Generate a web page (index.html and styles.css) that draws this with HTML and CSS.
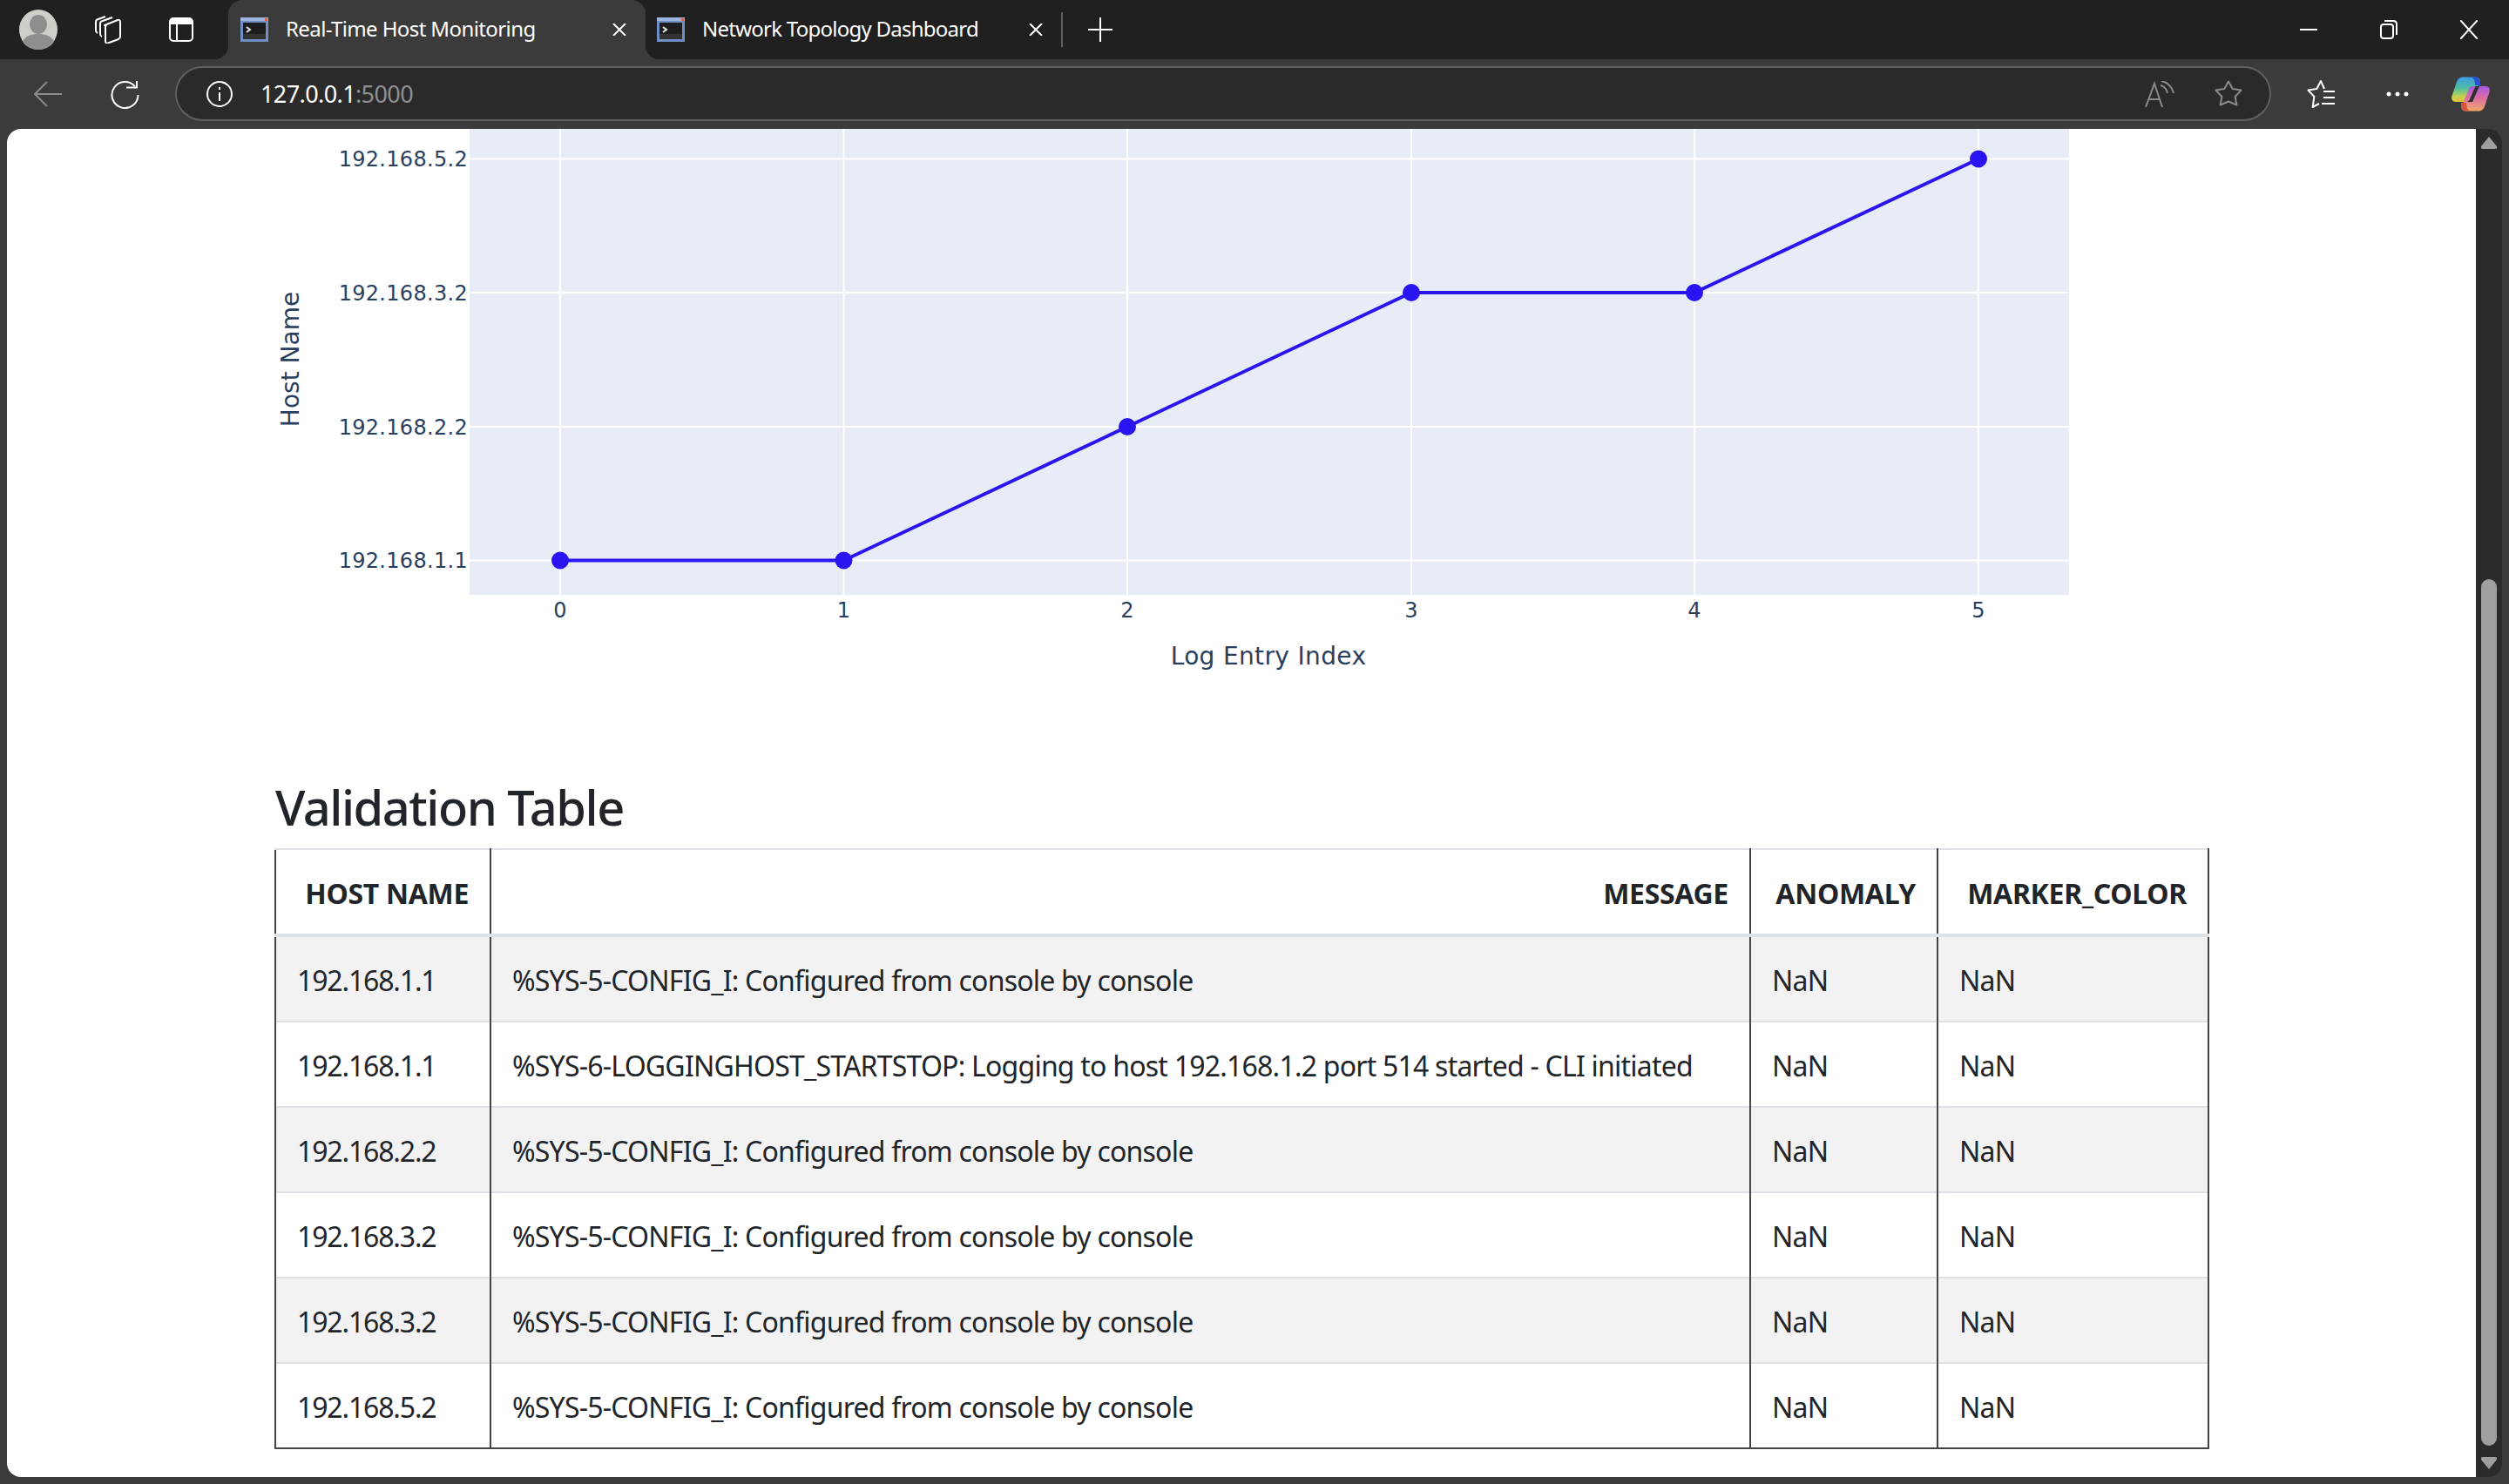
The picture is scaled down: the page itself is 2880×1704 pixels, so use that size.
FILE: index.html
```html
<!DOCTYPE html>
<html lang="en">
<head>
    <meta charset="UTF-8">
    <title>Real-Time Host Monitoring</title>
    <link rel="stylesheet" href="styles.css">
</head>
<body>
    <svg class="defs" width="0" height="0">
        <defs>
            <symbol id="favicon" viewBox="0 0 32 28">
                <rect x="0" y="0" width="32" height="28" fill="#6f8fc4"/>
                <rect x="0" y="0" width="32" height="4" fill="#9db5dd"/>
                <rect x="28" y="1" width="3" height="3" fill="#e0604a"/>
                <rect x="3" y="6" width="26" height="19" fill="#1e1e1e"/>
                <rect x="3" y="19" width="26" height="6" fill="#333"/>
                <path d="M7 11l4 3-4 3" fill="none" stroke="#e6e6e6" stroke-width="2"/>
            </symbol>
            <symbol id="tabclose" viewBox="0 0 16 14">
                <path d="M1 0L15 14M15 0L1 14" fill="none" stroke="#fff" stroke-width="2"/>
            </symbol>
            <linearGradient id="cpleft" x1="0" y1="0" x2="0" y2="1">
                <stop offset="0" stop-color="#3e9be8"/>
                <stop offset="0.45" stop-color="#4dbfa0"/>
                <stop offset="0.8" stop-color="#c8d24c"/>
                <stop offset="1" stop-color="#e6bf40"/>
            </linearGradient>
            <linearGradient id="cpright" x1="0" y1="1" x2="0" y2="0">
                <stop offset="0" stop-color="#a85ae0"/>
                <stop offset="0.5" stop-color="#dc6fa0"/>
                <stop offset="1" stop-color="#f2aa68"/>
            </linearGradient>
        </defs>
    </svg>

    <div class="tabstrip">
        <div class="slot slot-avatar">
            <svg width="44" height="46" viewBox="0 0 44 46">
                <ellipse cx="22" cy="23" rx="22" ry="23" fill="#cfcfca"/>
                <ellipse cx="22" cy="17" rx="10" ry="11" fill="#8e8e8c"/>
                <path d="M4 37c3-7 10-9 18-9s15 2 18 9c-4 6-11 9-18 9S8 43 4 37z" fill="#8e8e8c"/>
            </svg>
        </div>
        <div class="slot slot-work">
            <svg width="32" height="32" viewBox="0 0 32 32" fill="none" stroke="#fff" stroke-width="2" stroke-linejoin="round">
                <path d="M12 11l15-6c2-.5 3 .5 3 2v17c0 1.500-.5 2-2 3l-12 4.500c-1.500.5-3-.5-3-2V13c0-1 0-1.500 1-2z"/>
                <path d="M9 24c-1-.5-2-1-2-3V9c0-1 .5-2 1.500-2.500L21 2"/>
                <path d="M4 20c-1-.5-2-1-2-3V7c0-1 .5-2 1.500-2.500L13 1"/>
            </svg>
        </div>
        <div class="slot slot-vtabs">
            <svg width="28" height="28" viewBox="0 0 28 28">
                <rect x="1" y="1" width="26" height="26" rx="4" fill="none" stroke="#fff" stroke-width="2"/>
                <path d="M1 5a4 4 0 0 1 4-4h18a4 4 0 0 1 4 4v3H1z" fill="#fff"/>
                <path d="M9 8v19" stroke="#fff" stroke-width="2"/>
            </svg>
        </div>
        <div class="tab tab-active">
            <svg class="favicon"><use href="#favicon"/></svg>
            <span class="tab-title">Real-Time Host Monitoring</span>
            <svg class="tab-close"><use href="#tabclose"/></svg>
        </div>
        <div class="tab tab-other">
            <svg class="favicon"><use href="#favicon"/></svg>
            <span class="tab-title">Network Topology Dashboard</span>
            <svg class="tab-close"><use href="#tabclose"/></svg>
        </div>
        <div class="tab-sep"></div>
        <svg class="newtab" width="28" height="28" viewBox="0 0 28 28">
            <path d="M14 0v28M0 14h28" stroke="#fff" stroke-width="2"/>
        </svg>
        <div class="winctl">
            <div class="winbtn">
                <svg width="20" height="20" viewBox="0 0 20 20"><path d="M0 10h20" stroke="#fff" stroke-width="2"/></svg>
            </div>
            <div class="winbtn">
                <svg width="20" height="22" viewBox="0 0 20 22" fill="none" stroke="#fff" stroke-width="2">
                    <rect x="1" y="5" width="14" height="16" rx="3"/>
                    <path d="M5 1h10c3 0 4 2 4 4v12"/>
                </svg>
            </div>
            <div class="winbtn">
                <svg width="20" height="22" viewBox="0 0 20 22"><path d="M0 0l20 22M20 0L0 22" stroke="#fff" stroke-width="2"/></svg>
            </div>
        </div>
    </div>

    <div class="toolbar">
        <div class="navbtn">
            <svg width="32" height="30" viewBox="0 0 32 30" fill="none" stroke="#8b8b8b" stroke-width="2">
                <path d="M32 15H2M15 1L1 15l14 14"/>
            </svg>
        </div>
        <div class="navbtn">
            <svg width="33" height="34" viewBox="0 0 33 34" fill="none" stroke="#fff" stroke-width="2">
                <path d="M28 8.400A15 15 0 1 0 31.500 18"/>
                <path d="M30 2V9.500H18"/>
            </svg>
        </div>
        <div class="address">
            <svg width="30" height="32" viewBox="0 0 30 32" fill="none" stroke="#fff" stroke-width="2">
                <circle cx="15" cy="16" r="14"/>
                <path d="M15 14v10M15 8v3"/>
            </svg>
            <span class="url">127.0.0.1<span class="url-port">:5000</span></span>
            <svg class="addr-read" width="34" height="30" viewBox="0 0 34 30" fill="none" stroke="#8b8b8b" stroke-width="2">
                <path d="M1 30L11 3l9 27M4 21h13"/>
                <path d="M18 5c4 1 7 4 8 9M19 0c6 1 12 6 14 14"/>
            </svg>
            <svg class="addr-star" width="32" height="32" viewBox="0 0 32 32" fill="none" stroke="#8b8b8b" stroke-width="2" stroke-linejoin="round">
                <polygon points="16,1.500 20.700,10 30.500,11.600 23.600,19 25.400,28.500 16,24.500 6.600,28.500 8.400,19 1.500,11.600 11.300,10"/>
            </svg>
        </div>
        <div class="toolbtn">
            <svg width="32" height="32" viewBox="0 0 32 32" fill="none" stroke="#fff" stroke-width="2" stroke-linejoin="round">
                <path d="M20 10L16 1 11.300 10 1.500 11.600 8.400 19 6.600 31 14 27"/>
                <path d="M19 13h13M19 20h13M17 27h15"/>
            </svg>
        </div>
        <div class="toolbtn">
            <svg width="26" height="8" viewBox="0 0 26 8" fill="#fff">
                <circle cx="3" cy="4" r="2.500"/><circle cx="13" cy="4" r="2.500"/><circle cx="23" cy="4" r="2.500"/>
            </svg>
        </div>
        <div class="toolbtn toolbtn-copilot">
            <svg width="44" height="40" viewBox="4 8 44 40">
                <path d="M17 8.500H31C35 8.500 37 11 36.500 14L27 36C26 37 25 37 24 37H9C5 37 3.500 34 4.500 30L10 14C11.500 10 14 8.500 17 8.500Z" fill="url(#cpleft)"/>
                <path d="M27 8.500H31C35 8.500 37 11.500 37 18H31C31 13 30 10 27 8.500Z" fill="#2b50d6"/>
                <path d="M17 8.500H31C35 8.500 37 11 36.500 14L27 36C26 37 25 37 24 37H9C5 37 3.500 34 4.500 30L10 14C11.500 10 14 8.500 17 8.500Z" fill="url(#cpright)" transform="rotate(180 26 28)"/>
                <path d="M25 47.500H21C17 47.500 15 44.500 15 38H21C21 43 22 46 25 47.500Z" fill="#d5563a"/>
                <path d="M31.500 19L36 19 28 37 22 37 24.500 35z" fill="#2e2e2e"/>
            </svg>
        </div>
    </div>

    <div class="viewport">
        <div class="page">
            <svg class="chart" width="2221" height="660" viewBox="0 0 2221 660">
                <rect x="224" y="0" width="1836" height="535" fill="#e8ecf6"/>
                <g stroke="#fff" stroke-width="2">
                    <path d="M224 34.500H2060M224 188H2060M224 342H2060M224 495.500H2060"/>
                    <path d="M328 0V535M653.500 0V535M979 0V535M1305 0V535M1630 0V535M1956 0V535"/>
                </g>
                <polyline points="328,495.500 653.500,495.500 979,342 1305,188 1630,188 1956,34.500" fill="none" stroke="#2a14ef" stroke-width="4"/>
                <g fill="#2a14ef">
                    <circle cx="328" cy="495.500" r="10"/>
                    <circle cx="653.500" cy="495.500" r="10"/>
                    <circle cx="979" cy="342" r="10"/>
                    <circle cx="1305" cy="188" r="10"/>
                    <circle cx="1630" cy="188" r="10"/>
                    <circle cx="1956" cy="34.500" r="10"/>
                </g>
                <g class="tick tick-y">
                    <text x="222" y="43">192.168.5.2</text>
                    <text x="222" y="197">192.168.3.2</text>
                    <text x="222" y="351">192.168.2.2</text>
                    <text x="222" y="504">192.168.1.1</text>
                </g>
                <g class="tick tick-x">
                    <text x="328" y="561">0</text>
                    <text x="653.500" y="561">1</text>
                    <text x="979" y="561">2</text>
                    <text x="1305" y="561">3</text>
                    <text x="1630" y="561">4</text>
                    <text x="1956" y="561">5</text>
                </g>
                <text class="axis-title axis-title-x" x="1141" y="615">Log Entry Index</text>
                <text class="axis-title" transform="translate(28 264.500) rotate(-90)">Host Name</text>
            </svg>

            <h3 class="table-heading">Validation Table</h3>
            <table class="log-table">
                <colgroup>
                    <col class="col-host">
                    <col class="col-msg">
                    <col class="col-anom">
                    <col class="col-marker">
                </colgroup>
                <thead>
                    <tr>
                        <th>HOST NAME</th>
                        <th>MESSAGE</th>
                        <th>ANOMALY</th>
                        <th>MARKER_COLOR</th>
                    </tr>
                </thead>
                <tbody>
                    <tr>
                        <td class="cell-host">192.168.1.1</td>
                        <td>%SYS-5-CONFIG_I: Configured from console by console</td>
                        <td>NaN</td>
                        <td>NaN</td>
                    </tr>
                    <tr>
                        <td class="cell-host">192.168.1.1</td>
                        <td>%SYS-6-LOGGINGHOST_STARTSTOP: Logging to host 192.168.1.2 port 514 started - CLI initiated</td>
                        <td>NaN</td>
                        <td>NaN</td>
                    </tr>
                    <tr>
                        <td class="cell-host">192.168.2.2</td>
                        <td>%SYS-5-CONFIG_I: Configured from console by console</td>
                        <td>NaN</td>
                        <td>NaN</td>
                    </tr>
                    <tr>
                        <td class="cell-host">192.168.3.2</td>
                        <td>%SYS-5-CONFIG_I: Configured from console by console</td>
                        <td>NaN</td>
                        <td>NaN</td>
                    </tr>
                    <tr>
                        <td class="cell-host">192.168.3.2</td>
                        <td>%SYS-5-CONFIG_I: Configured from console by console</td>
                        <td>NaN</td>
                        <td>NaN</td>
                    </tr>
                    <tr>
                        <td class="cell-host">192.168.5.2</td>
                        <td>%SYS-5-CONFIG_I: Configured from console by console</td>
                        <td>NaN</td>
                        <td>NaN</td>
                    </tr>
                </tbody>
            </table>
        </div>
        <div class="scrollbar">
            <svg class="scroll-arrow" width="18" height="14" viewBox="0 0 18 14"><path d="M9 0L18 11q1 3-2 3H2q-3 0-2-3z" fill="#9f9f9f"/></svg>
            <div class="scroll-thumb"></div>
            <svg class="scroll-arrow" width="18" height="14" viewBox="0 0 18 14"><path d="M9 14L18 3q1-3-2-3H2q-3 0-2 3z" fill="#9f9f9f"/></svg>
        </div>
    </div>
</body>
</html>
```

FILE: styles.css
```css
* {
    box-sizing: border-box;
}

html, body {
    margin: 0;
    padding: 0;
    height: 100%;
    overflow: hidden;
}

body {
    font-family: "Noto Sans", "Open Sans", sans-serif;
    background-color: #3b3b3b;
    color: #212529;
}

.defs {
    position: absolute;
}

/* browser chrome: tabs */
.tabstrip {
    display: flex;
    align-items: center;
    height: 68px;
    background-color: #202020;
    color: #fff;
}

.slot {
    display: flex;
    align-items: center;
    justify-content: center;
    height: 68px;
}

.slot-avatar {
    width: 88px;
}

.slot-work {
    width: 72px;
}

.slot-vtabs {
    width: 96px;
}

.tab {
    display: flex;
    align-items: center;
    height: 68px;
    font-size: 24px;
    letter-spacing: -0.75px;
}

.tab-active {
    position: relative;
    width: 479px;
    margin-left: 6px;
    padding: 0 22px 0 14px;
    background-color: #3b3b3b;
    border-radius: 16px 16px 0 0;
    letter-spacing: -0.6px;
}

.tab-active::before,
.tab-active::after {
    content: "";
    position: absolute;
    bottom: 0;
    width: 16px;
    height: 16px;
}

.tab-active::before {
    left: -16px;
    background: radial-gradient(circle at 0 0, transparent 16px, #3b3b3b 16.5px);
}

.tab-active::after {
    right: -16px;
    background: radial-gradient(circle at 100% 0, transparent 16px, #3b3b3b 16.5px);
}

.tab-other {
    width: 477px;
    padding: 0 21px 0 13px;
}

.favicon {
    width: 32px;
    height: 28px;
    flex-shrink: 0;
}

.tab-title {
    margin-left: 20px;
    padding-bottom: 3px;
    white-space: nowrap;
}

.tab-close {
    width: 16px;
    height: 14px;
    margin-left: auto;
    flex-shrink: 0;
}

.tab-sep {
    width: 2px;
    height: 40px;
    background-color: #5f5f5f;
}

.newtab {
    margin-left: 29px;
}

.winctl {
    display: flex;
    margin-left: auto;
}

.winbtn {
    display: flex;
    align-items: center;
    justify-content: center;
    width: 92px;
    height: 68px;
}

/* browser chrome: address row */
.toolbar {
    display: flex;
    align-items: center;
    height: 80px;
    padding-left: 11px;
    background-color: #3b3b3b;
}

.navbtn,
.toolbtn {
    display: flex;
    align-items: center;
    justify-content: center;
    width: 88px;
    height: 80px;
    flex-shrink: 0;
}

.toolbtn-copilot {
    width: 80px;
}

.address {
    display: flex;
    align-items: center;
    width: 2406px;
    height: 63px;
    margin: 0 13px 1px 14px;
    padding: 0 31px 0 34px;
    background-color: #2a2a2a;
    border: 2px solid #5f5f5f;
    border-radius: 32px;
    flex-shrink: 0;
}

.url {
    margin-left: 32px;
    font-size: 27px;
    letter-spacing: -0.6px;
    color: #fff;
}

.url-port {
    color: #8f8f8f;
}

.addr-read {
    margin-left: auto;
}

.addr-star {
    margin-left: 46px;
}

/* page area */
.viewport {
    display: flex;
    height: 1548px;
    margin: 0 8px;
}

.page {
    flex: 1;
    padding-left: 307px;
    overflow: hidden;
    background-color: #fff;
    border-radius: 16px 0 0 16px;
}

.scrollbar {
    display: flex;
    flex-direction: column;
    align-items: center;
    width: 30px;
    padding: 9px 0;
    background-color: #2b2b2b;
    border-radius: 0 16px 16px 0;
}

.scroll-thumb {
    width: 18px;
    height: 995px;
    margin-top: auto;
    margin-bottom: 13px;
    background-color: #9f9f9f;
    border-radius: 9px;
}

/* chart */
.chart {
    display: block;
}

.tick text {
    font-family: "DejaVu Sans", Verdana, sans-serif;
    font-size: 24px;
    letter-spacing: 0.3px;
    fill: #2a3f5f;
}

.tick-y text {
    text-anchor: end;
}

.tick-x text {
    text-anchor: middle;
}

.axis-title {
    font-family: "DejaVu Sans", Verdana, sans-serif;
    font-size: 28px;
    fill: #2a3f5f;
    text-anchor: middle;
}

.axis-title-x {
    letter-spacing: 0.35px;
}

/* table */
.table-heading {
    margin: 85px 0 14px 1px;
    font-size: 56px;
    font-weight: 500;
    line-height: 67px;
    letter-spacing: -1.5px;
}

.log-table {
    width: 2219px;
    table-layout: fixed;
    border-collapse: collapse;
    font-size: 32px;
    letter-spacing: -0.78px;
}

.col-host {
    width: 247px;
}

.col-msg {
    width: 1446px;
}

.col-anom {
    width: 215px;
}

.col-marker {
    width: 311px;
}

.log-table th,
.log-table td {
    padding: 26px 24px 22px;
    line-height: 48px;
    border-left: 2px solid #444;
    border-right: 2px solid #444;
    border-top: 2px solid #dee2e6;
}

.log-table th {
    font-weight: 700;
    text-align: right;
    white-space: nowrap;
    letter-spacing: -0.3px;
    border-bottom: 4px solid #dee2e6;
}

.log-table td.cell-host {
    letter-spacing: -1.15px;
}

.log-table tbody tr:nth-child(odd) {
    background-color: #f2f2f2;
}

.log-table tbody tr:last-child td {
    border-bottom: 2px solid #444;
}
```
